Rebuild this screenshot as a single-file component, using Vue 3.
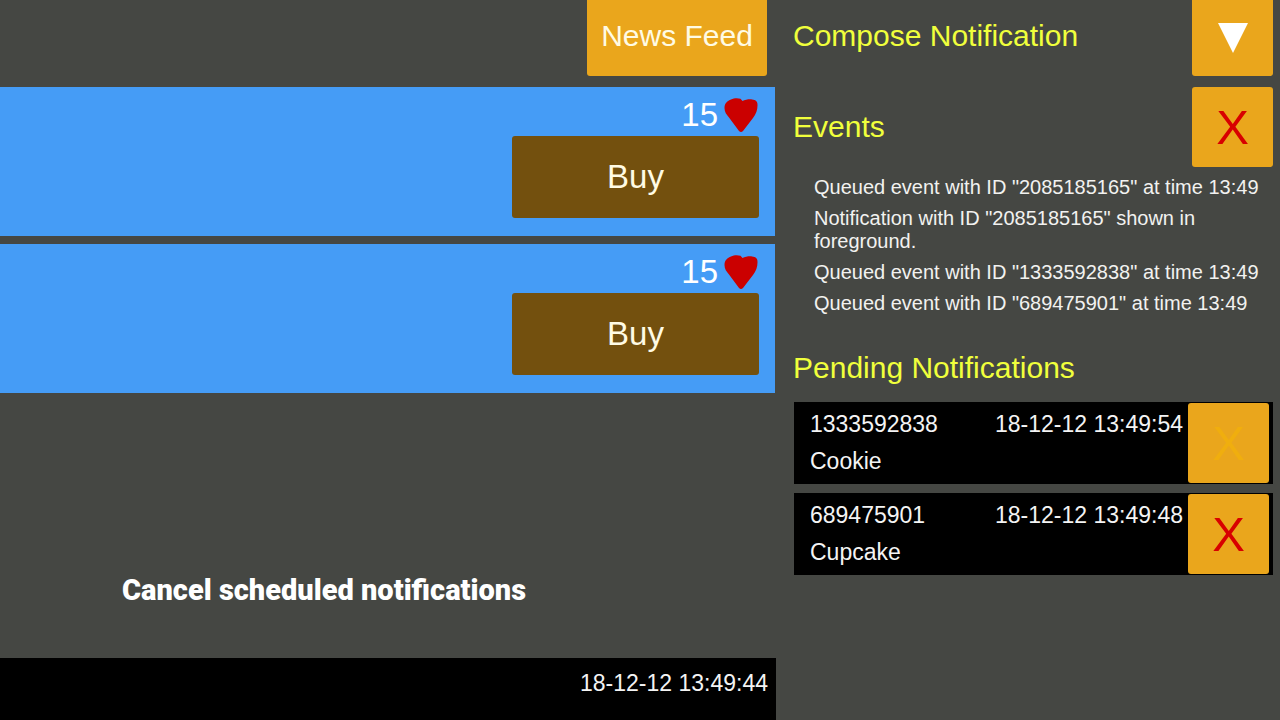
<script setup>
import { ref } from 'vue'

const items = ref([
  { id: 1, likes: 15 },
  { id: 2, likes: 15 },
])

const events = ref([
  'Queued event with ID "2085185165" at time 13:49',
  'Notification with ID "2085185165" shown in foreground.',
  'Queued event with ID "1333592838" at time 13:49',
  'Queued event with ID "689475901" at time 13:49',
])

const pending = ref([
  { id: '1333592838', time: '18-12-12 13:49:54', title: 'Cookie', fading: true },
  { id: '689475901', time: '18-12-12 13:49:48', title: 'Cupcake', fading: false },
])
</script>

<template>
  <div class="app">
    <main class="shop">
      <header class="shop-header">
        <button type="button" class="tile feed">News Feed</button>
      </header>

      <section class="cards">
        <article v-for="item in items" :key="item.id" class="card">
          <div class="likes">
            <span>{{ item.likes }}</span>
            <svg class="heart" viewBox="0 0 34 36" aria-hidden="true">
              <path
                d="M0.5 11 C0.5 6 3.5 4 7 2.4 C10 1 14 1 16.5 1.8 L18.5 4 C21 2.8 24 2.2 28 2.4 C32 2.6 33.8 4.5 33.5 8.5 C33.5 13 32 17 29 21 L19 34 Q17 36 15 34 L5 20.5 C2.5 17.5 0.5 15 0.5 11 Z"
              />
            </svg>
          </div>
          <button type="button" class="buy">Buy</button>
        </article>
      </section>

      <p class="caption">Cancel scheduled notifications</p>

      <footer class="clock">18-12-12 13:49:44</footer>
    </main>

    <aside class="panel">
      <div class="panel-head compose">
        <h2>Compose Notification</h2>
        <button type="button" class="tile square drop" aria-label="Expand">
          <svg class="arrow" viewBox="0 0 30 30" aria-hidden="true">
            <path d="M0 0 H30 L15 30 Z" />
          </svg>
        </button>
      </div>

      <div class="panel-head">
        <h2>Events</h2>
        <button type="button" class="tile square cross" aria-label="Clear events">X</button>
      </div>

      <ul class="events">
        <li v-for="event in events" :key="event">{{ event }}</li>
      </ul>

      <h2 class="pending-title">Pending Notifications</h2>

      <ul class="pending">
        <li v-for="note in pending" :key="note.id" class="note">
          <div class="note-body">
            <div class="note-line">
              <span>{{ note.id }}</span>
              <time>{{ note.time }}</time>
            </div>
            <div class="note-line">{{ note.title }}</div>
          </div>
          <button
            type="button"
            class="tile square cross"
            :class="{ fading: note.fading }"
            :aria-label="'Cancel ' + note.title"
          >X</button>
        </li>
      </ul>
    </aside>
  </div>
</template>

<style>
body {
  margin: 0;
  background: #454743;
}
</style>

<style scoped>
.app {
  display: grid;
  grid-template-columns: minmax(0, 1fr) 504px;
  min-height: 100vh;
  background: #454743;
  color: #fff;
  font-family: "Liberation Sans", Arial, sans-serif;
}

button {
  display: flex;
  align-items: center;
  justify-content: center;
  margin: 0;
  padding: 0;
  border: 0;
  border-radius: 3px;
  font-family: inherit;
  cursor: pointer;
}

h2,
p,
ul {
  margin: 0;
  padding: 0;
  list-style: none;
}

h2 {
  color: #f0ff3c;
  font-size: 30px;
  line-height: 36px;
  font-weight: 400;
}

.tile {
  background: #eaa61c;
}

.shop {
  display: flex;
  flex-direction: column;
}

.shop-header {
  display: flex;
  justify-content: flex-end;
  padding-right: 9px;
}

.feed {
  box-sizing: border-box;
  width: 180px;
  height: 76px;
  padding-bottom: 4px;
  border-radius: 0 0 3px 3px;
  color: #fffbe4;
  font-size: 30px;
}

.cards {
  display: flex;
  flex-direction: column;
  gap: 8px;
  margin-top: 11px;
}

.card {
  display: flex;
  flex-direction: column;
  align-items: flex-end;
  margin-right: 1px;
  padding: 8px 16px 18px 0;
  background: #459cf6;
}

.likes {
  display: flex;
  align-items: center;
  gap: 6px;
  height: 39px;
  padding: 0 1px 2px 0;
  font-size: 33px;
}

.heart {
  width: 34px;
  height: 36px;
  fill: #cb0000;
}

.buy {
  width: 247px;
  height: 82px;
  background: #73500e;
  color: #fffbe4;
  font-size: 33px;
}

.caption {
  margin: auto 0 50px 122px;
  font-family: Roboto, sans-serif;
  font-size: 29px;
  line-height: 36px;
  font-weight: 900;
}

.clock {
  height: 62px;
  padding-right: 8px;
  background: #000;
  color: #f4f4f4;
  font-size: 23px;
  line-height: 50px;
  text-align: right;
}

.panel {
  padding: 0 7px 0 17px;
}

.panel-head {
  display: flex;
  align-items: center;
  justify-content: space-between;
}

.compose {
  align-items: flex-start;
  margin-bottom: 11px;
}

.compose h2 {
  padding-top: 18px;
}

.square {
  flex: none;
  width: 81px;
  height: 80px;
}

.drop {
  height: 76px;
  border-radius: 0 0 3px 3px;
}

.arrow {
  width: 30px;
  height: 30px;
  fill: #fff;
}

.cross {
  color: #d80000;
  font-size: 49px;
}

.fading {
  color: #f0ae0e;
}

.events {
  display: flex;
  flex-direction: column;
  gap: 8px;
  padding: 9px 8px 0 21px;
  color: #f2f2f0;
  font-size: 20px;
  line-height: 23px;
}

.pending-title {
  margin: 35px 0 16px;
}

.pending {
  display: flex;
  flex-direction: column;
  gap: 9px;
}

.note {
  display: flex;
  align-items: center;
  margin-left: 1px;
  padding: 1px 4px 1px 16px;
  background: #000;
  color: #f4f4f4;
  font-size: 23px;
  line-height: 37px;
}

.note-body {
  flex: 1;
  margin-right: 5px;
}

.note-line {
  display: flex;
  justify-content: space-between;
}
</style>
